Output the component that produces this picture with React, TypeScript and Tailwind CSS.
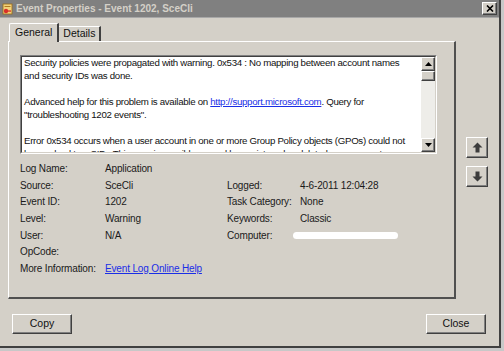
import React from "react";

const font = { fontFamily: '"Liberation Sans", Arial, sans-serif' };

// classic raised 3D edge
const raised =
  "border border-t-white border-l-white border-r-[#404040] border-b-[#404040] shadow-[inset_-1px_-1px_0_#808080]";

const message = [
  "Security policies were propagated with warning. 0x534 : No mapping between account names",
  "and security IDs was done.",
  "",
  "LINK",
  '"troubleshooting 1202 events".',
  "",
  "Error 0x534 occurs when a user account in one or more Group Policy objects (GPOs) could not",
  "be resolved to a SID.  This error is possibly caused by a mistyped or deleted user account",
];

function ArrowBtn({ down }: { down?: boolean }) {
  return (
    <div className={`w-[22px] h-[21px] bg-[#d4d0c8] ${raised} flex items-center justify-center`}>
      <svg width="11" height="11" viewBox="0 0 11 11" className={down ? "rotate-180" : ""}>
        <path d="M5.5 0.5 L10.5 5.5 L7.5 5.5 L7.5 10.5 L3.5 10.5 L3.5 5.5 L0.5 5.5 Z" fill="#3c3c3c" />
      </svg>
    </div>
  );
}

function ScrollBtn({ down }: { down?: boolean }) {
  return (
    <div className={`h-[14px] w-full bg-[#d4d0c8] ${raised} flex items-center justify-center`}>
      <svg width="7" height="4" viewBox="0 0 7 4" className={down ? "rotate-180" : ""}>
        <path d="M3.5 0 L7 4 L0 4 Z" fill="#000" />
      </svg>
    </div>
  );
}

function Field({ label, value }: { label: string; value?: React.ReactNode }) {
  return (
    <>
      <span className="text-[#1a1a1a] leading-[14px]">{label}</span>
      <span className="text-[#1a1a1a] leading-[14px]">{value}</span>
    </>
  );
}

export default function App() {
  return (
    <div className="w-[504px] h-[351px] bg-[#c8c8c8] overflow-hidden" style={font}>
      <div className="w-[501px] h-[348px] bg-[#d4d0c8] border-r-2 border-b-2 border-r-[#404040] border-b-[#404040] flex flex-col">
        {/* title bar */}
        <div className="h-[18px] bg-[#808080] flex items-center pl-[2px] pr-[2px] border-b border-[#a8a8a8]">
          <svg width="11" height="12" viewBox="0 0 11 12" className="mr-[3px]">
            <rect x="1" y="1" width="9" height="10" fill="#f3d27a" stroke="#9a6a18" strokeWidth="0.8" />
            <rect x="2.5" y="3" width="6" height="1" fill="#b07a20" />
            <circle cx="4" cy="8" r="2.2" fill="#d8302a" />
            <rect x="5" y="7.4" width="4" height="1.3" fill="#d8302a" />
          </svg>
          <span className="text-[10px] font-bold text-[#d4d0c8] leading-none">
            Event Properties - Event 1202, SceCli
          </span>
          <div className={`ml-auto w-[15px] h-[13px] bg-[#d4d0c8] ${raised} flex items-center justify-center`}>
            <svg width="8" height="7" viewBox="0 0 8 7">
              <path d="M1 0.5 L7 6.5 M7 0.5 L1 6.5" stroke="#000" strokeWidth="1.6" />
            </svg>
          </div>
        </div>

        {/* body */}
        <div className="flex-1 flex flex-col px-[8px] pt-[5px]">
          <div className="flex gap-[10px]">
            <div className="flex flex-col w-[448px]">
              {/* tabs */}
              <div className="flex items-end h-[18px] pl-[1px] relative z-10">
                <div className="h-[19px] px-[5px] bg-[#d4d0c8] border-t border-l border-t-white border-l-white border-r-2 border-r-[#404040] rounded-tl-[2px] flex items-center text-[10.5px] text-[#111] mb-[-1px]">
                  General
                </div>
                <div className="h-[15px] px-[4px] bg-[#d4d0c8] border-t border-t-white border-r-2 border-r-[#404040] flex items-center text-[10.5px] text-[#111]">
                  Details
                </div>
              </div>
              {/* panel */}
              <div className="h-[258px] border-t border-l border-t-white border-l-white border-r-2 border-b-2 border-r-[#505050] border-b-[#505050] px-[11px] pt-[13px]">
                {/* message box */}
                <div className="h-[99px] w-[417px] bg-white border border-t-[#808080] border-l-[#808080] border-r-white border-b-white flex">
                  <div className="flex-1 border border-t-[#404040] border-l-[#404040] border-r-[#d4d0c8] border-b-[#d4d0c8] flex overflow-hidden">
                    <div className="flex-1 pl-[2px] -mt-[1px] text-[9.7px] tracking-[-0.3px] leading-[13px] text-[#111] overflow-hidden whitespace-pre">
                      {message.map((line, i) =>
                        line === "LINK" ? (
                          <div key={i}>
                            Advanced help for this problem is available on{" "}
                            <span className="text-[#1a2ee6] underline">http://support.microsoft.com</span>. Query for
                          </div>
                        ) : (
                          <div key={i} className="h-[13px]">{line}</div>
                        )
                      )}
                    </div>
                    <div className="w-[14px] flex flex-col bg-[#eeede9]">
                      <ScrollBtn />
                      <div className={`h-[10px] bg-[#d4d0c8] ${raised}`} />
                      <div className="flex-1" />
                      <ScrollBtn down />
                    </div>
                  </div>
                </div>

                {/* fields */}
                <div className="mt-[7px] grid grid-cols-[85px_122px_73px_1fr] auto-rows-[16.6px] items-center text-[10px] tracking-[-0.15px]">
                  <Field label="Log Name:" value="Application" />
                  <span />
                  <span />
                  <Field label="Source:" value="SceCli" />
                  <Field label="Logged:" value="4-6-2011 12:04:28" />
                  <Field label="Event ID:" value="1202" />
                  <Field label="Task Category:" value="None" />
                  <Field label="Level:" value="Warning" />
                  <Field label="Keywords:" value="Classic" />
                  <Field label="User:" value="N/A" />
                  <Field
                    label="Computer:"
                    value={<span className="block w-[105px] h-[7px] bg-white rounded-full blur-[0.6px] -ml-[7px]" />}
                  />
                  <Field label="OpCode:" />
                  <span />
                  <span />
                  <Field
                    label="More Information:"
                    value={<span className="text-[#1a2ee6] underline">Event Log Online Help</span>}
                  />
                </div>
              </div>
            </div>

            {/* up/down */}
            <div className="flex flex-col gap-[8px] pt-[114px]">
              <ArrowBtn />
              <ArrowBtn down />
            </div>
          </div>

          {/* bottom buttons */}
          <div className="flex justify-between mt-[15px] pl-[4px] pr-[5px]">
            <div className={`w-[60px] h-[20px] ${raised} flex items-center justify-center text-[10.5px] text-[#111]`}>Copy</div>
            <div className={`w-[60px] h-[20px] ${raised} flex items-center justify-center text-[10.5px] text-[#111]`}>Close</div>
          </div>
        </div>
      </div>
    </div>
  );
}
